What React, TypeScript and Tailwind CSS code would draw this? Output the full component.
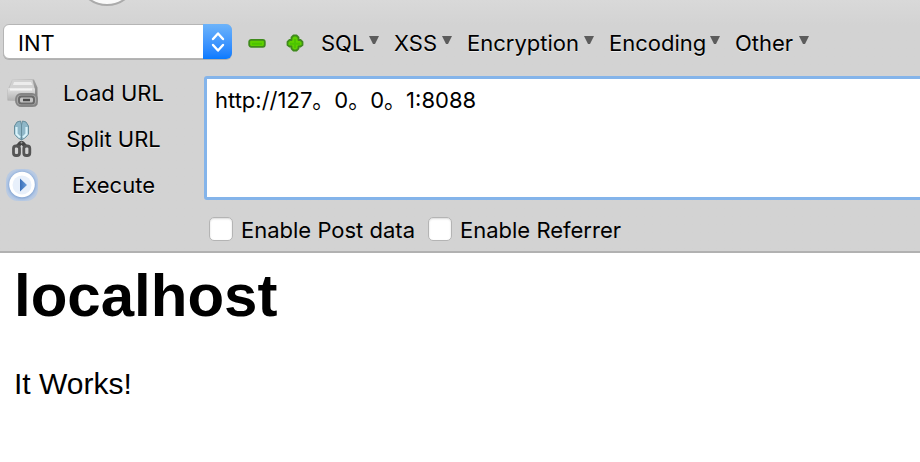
import { useState } from "react";

const menus = [
  { label: "SQL", width: "w-[73px]" },
  { label: "XSS", width: "w-[73px]" },
  { label: "Encryption", width: "w-[142px]" },
  { label: "Encoding", width: "w-[126px]" },
  { label: "Other", width: "w-[89px]" },
];

const etched = "[text-shadow:0_1px_0_rgba(255,255,255,0.6)]";

function MinusIcon() {
  return (
    <svg width="18" height="18" viewBox="0 0 18 18" aria-hidden="true">
      <rect x="1.2" y="5.8" width="15.6" height="7" rx="2" fill="#5fd000" stroke="#3f8a1c" strokeWidth="1.8" />
      <path d="M4 9.8h10" stroke="#4cc400" strokeWidth="2" />
    </svg>
  );
}

function PlusIcon() {
  return (
    <svg width="18" height="18" viewBox="0 0 18 18" aria-hidden="true">
      <path
        d="M7.500 1.5h3l2 2v2.500h2l2 2v3l-2 1.500h-2v2l-2 2h-3l-2-2v-2h-2l-2-1.500V8l2-2h2V3.500z"
        fill="#5fd000"
        stroke="#3f8a1c"
        strokeWidth="1.8"
        strokeLinejoin="round"
      />
      <path d="M4 9.8h10M9 5v9" stroke="#4cc400" strokeWidth="2" />
    </svg>
  );
}

function LoadIcon() {
  return (
    <svg width="32" height="32" viewBox="0 0 32 32" aria-hidden="true">
      <defs>
        <linearGradient id="drive" x1="0" y1="0" x2="0" y2="1">
          <stop offset="0" stopColor="#e2e2e2" />
          <stop offset="1" stopColor="#b4b4b4" />
        </linearGradient>
        <linearGradient id="driveSide" x1="0" y1="0" x2="1" y2="1">
          <stop offset="0" stopColor="#cfcfcf" />
          <stop offset="1" stopColor="#6e6e6e" />
        </linearGradient>
      </defs>
      <path d="M6 2.500h22l3.500 8v17l-2 2H13l-2-6H1.500V13z" fill="url(#driveSide)" />
      <path d="M6.500 3h20l2 8H3.500z" fill="#d2d2d2" />
      <path d="M8 5h17l1.500 3H7z" fill="#ececec" />
      <rect x="2" y="11" width="27" height="12" rx="1" fill="url(#drive)" />
      <path d="M4 12.500h22" stroke="#f4f4f4" strokeWidth="2" />
      <rect x="10" y="17" width="21" height="12" rx="5" fill="#a6a6a6" stroke="#858585" strokeWidth="1.800" />
      <rect x="13" y="19.500" width="15" height="7" rx="2.500" fill="#c4c4c4" stroke="#6a6a6a" strokeWidth="2" />
      <path d="M17 23h7" stroke="#4a4a4a" strokeWidth="2.500" />
    </svg>
  );
}

function ScissorsIcon() {
  return (
    <svg width="32" height="38" viewBox="0 0 32 38" fill="none" aria-hidden="true">
      <path d="M11 2l3.500-1 1 4v15l-4-2.500-3-3.500V6z" fill="#8fb7c8" stroke="#668d9c" />
      <path d="M16.500 1l3.500 1 2.500 4v8l-3 3.500-4 2.500V5z" fill="#8fb7c8" stroke="#668d9c" />
      <path d="M10.500 7v7l3.500 3.500M20.500 7v7l-3.500 3.500" stroke="#d8f2fa" strokeWidth="2.200" />
      <path d="M15.500 21v3M14.500 23l-3.500 4M16.500 23l3.500 4" stroke="#444" strokeWidth="4" />
      <rect x="7.500" y="26" width="6" height="9.500" rx="2.500" stroke="#555" strokeWidth="2.800" />
      <rect x="17.800" y="26" width="6" height="9.500" rx="2.500" stroke="#555" strokeWidth="2.800" />
      <circle cx="15.500" cy="22.500" r="1" fill="#999" />
    </svg>
  );
}

function ExecuteIcon() {
  return (
    <svg width="32" height="32" viewBox="0 0 32 32" aria-hidden="true">
      <defs>
        <radialGradient id="halo">
          <stop offset="0.8" stopColor="#8fadd6" />
          <stop offset="0.9" stopColor="#a9c1e3" />
          <stop offset="1" stopColor="#b9cae2" />
        </radialGradient>
        <linearGradient id="play" x1="0" y1="0" x2="1" y2="0">
          <stop offset="0" stopColor="#3a6fb8" />
          <stop offset="1" stopColor="#6d9fdc" />
        </linearGradient>
      </defs>
      <rect width="32" height="32" rx="12" fill="url(#halo)" />
      <circle cx="16" cy="15.500" r="12.800" fill="#fff" />
      <circle cx="16" cy="16" r="9.500" fill="#e8f0fb" />
      <path d="M14 9.500l7 6.500-7 6.500z" fill="url(#play)" />
    </svg>
  );
}

const actions = [
  { label: "Load URL", Icon: LoadIcon },
  { label: "Split URL", Icon: ScissorsIcon },
  { label: "Execute", Icon: ExecuteIcon },
];

function CheckOption({ label }: { label: string }) {
  return (
    <label className="flex items-center gap-2">
      <input
        type="checkbox"
        className="size-6 shrink-0 appearance-none rounded-[5px] border border-[#b4b4b4] bg-white shadow-[inset_0_1px_2px_rgba(0,0,0,0.15)] checked:bg-[#2a87f5]"
      />
      <span className="pt-0.5 whitespace-nowrap">{label}</span>
    </label>
  );
}

export default function App() {
  const [url, setUrl] = useState("http://127。0。0。1:8088");

  return (
    <div className="min-h-screen bg-white text-black">
      <header className="relative overflow-hidden border-b-2 border-[#b1b1b1] bg-linear-to-b from-[#d9d9d9] to-[#d3d3d3] to-10% pt-6 font-['Inter','Noto_Sans_CJK_SC',sans-serif] text-[22px] leading-7">
        <div className="absolute -top-14 left-[76px] size-[62px] rounded-full border-2 border-[#ababab] bg-[#fafafa]" />

        <div className="flex items-center pl-[3px]">
          <div className="relative w-[229px] shrink-0">
            <select
              aria-label="Injection type"
              className="block h-[35px] w-full appearance-none rounded-md border border-[#b5b5b5] bg-white pt-0.5 pl-3.5 shadow-[0_1px_0_#b0b0b0]"
            >
              <option>INT</option>
            </select>
            <span className="pointer-events-none absolute inset-y-0 right-0 flex w-[29px] items-center justify-center rounded-r-md bg-linear-to-b from-[#6cb3fa] to-[#067aff]">
              <svg width="16" height="22" viewBox="0 0 16 22" fill="none" stroke="white" strokeWidth="2.4" strokeLinecap="round" strokeLinejoin="round" aria-hidden="true">
                <path d="M3 8l5-5.500 5 5.500M3 14l5 5.500 5-5.500" />
              </svg>
            </span>
          </div>
          <button type="button" aria-label="Remove" className="ml-4 shrink-0 pt-0.5">
            <MinusIcon />
          </button>
          <button type="button" aria-label="Add" className="ml-5 shrink-0 pt-0.5">
            <PlusIcon />
          </button>
          <nav className="ml-[17px] flex pt-0.5">
            {menus.map(({ label, width }) => (
              <button key={label} type="button" className={`flex shrink-0 items-center justify-between pr-[15px] ${width} ${etched}`}>
                {label}
                <svg width="10" height="12" viewBox="0 0 10 12" className="mb-1" aria-hidden="true">
                  <path d="M0 1h10L6 9H4z" fill="#5c5c5c" />
                </svg>
              </button>
            ))}
          </nav>
        </div>

        <div className="mt-3 flex">
          <div className="flex w-[204px] shrink-0 flex-col pl-1.5">
            {actions.map(({ label, Icon }) => (
              <button key={label} type="button" className="flex h-[46px] items-center">
                <span className="flex w-8 shrink-0 justify-center pb-0.5">
                  <Icon />
                </span>
                <span className={`w-[151px] pb-0.5 text-center ${etched}`}>{label}</span>
              </button>
            ))}
          </div>
          <textarea
            aria-label="URL"
            value={url}
            onChange={(event) => setUrl(event.target.value)}
            className="mt-[5px] -mr-1 h-[124px] min-w-0 flex-1 resize-none rounded-[3px] border-[3px] border-[#84b4ea] bg-white px-2 py-[7px] outline-none"
          />
        </div>

        <div className="flex gap-[13px] pt-[5px] pb-[7px] pl-[209px]">
          <CheckOption label="Enable Post data" />
          <CheckOption label="Enable Referrer" />
        </div>
      </header>

      <main className="px-3.5 pt-2 font-['Liberation_Sans',Arial,sans-serif]">
        <h1 className="text-[60px] leading-[70px] font-bold">localhost</h1>
        <p className="mt-[35px] text-[30px] leading-9">It Works!</p>
      </main>
    </div>
  );
}
